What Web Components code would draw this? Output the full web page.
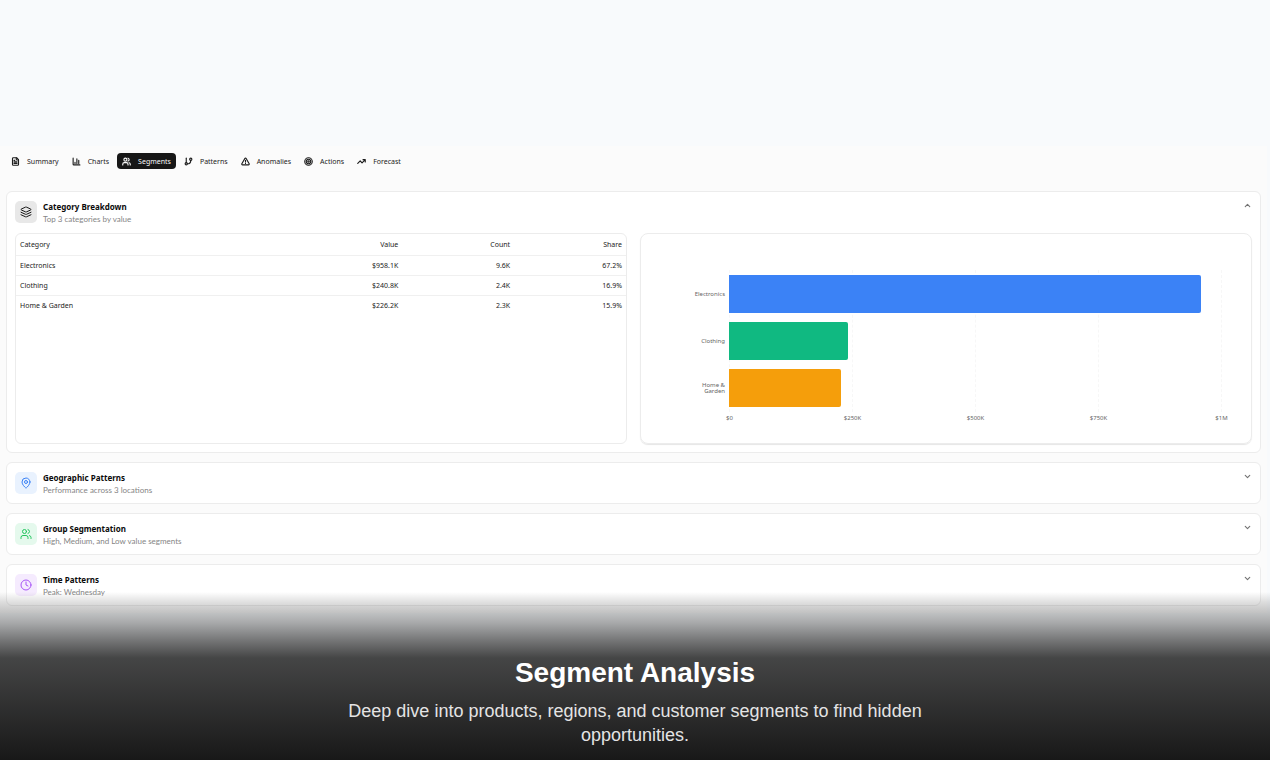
<!DOCTYPE html>
<html lang="en">
<head>
<meta charset="utf-8">
<title>Segment Analysis</title>
<style>
    body {
        margin: 0;
        background: #f8fafc;
        font-family: "Noto Sans", "Open Sans", sans-serif;
        color: #1c1c1c;
    }
</style>
</head>
<body>
<segment-page>
    <tab-bar slot="tabs">
        <tab-item icon="file">Summary</tab-item>
        <tab-item icon="chart">Charts</tab-item>
        <tab-item icon="users" active>Segments</tab-item>
        <tab-item icon="branch">Patterns</tab-item>
        <tab-item icon="alert">Anomalies</tab-item>
        <tab-item icon="target">Actions</tab-item>
        <tab-item icon="trend">Forecast</tab-item>
    </tab-bar>
    <segment-card icon="layers" tone="gray" open>
        <span slot="title">Category Breakdown</span>
        <span slot="subtitle">Top 3 categories by value</span>
        <category-table></category-table>
        <category-chart></category-chart>
    </segment-card>
    <segment-card icon="pin" tone="blue">
        <span slot="title">Geographic Patterns</span>
        <span slot="subtitle">Performance across 3 locations</span>
    </segment-card>
    <segment-card icon="users" tone="green">
        <span slot="title">Group Segmentation</span>
        <span slot="subtitle">High, Medium, and Low value segments</span>
    </segment-card>
    <segment-card icon="clock" tone="purple">
        <span slot="title">Time Patterns</span>
        <span slot="subtitle">Peak: Wednesday</span>
    </segment-card>
    <caption-overlay slot="caption">
        <span slot="title">Segment Analysis</span>
        Deep dive into products, regions, and customer segments to find hidden opportunities.
    </caption-overlay>
</segment-page>

<script>
const ICONS = {
    file: '<path d="M15 2H6a2 2 0 0 0-2 2v16a2 2 0 0 0 2 2h12a2 2 0 0 0 2-2V7Z"/><path d="M14 2v4a2 2 0 0 0 2 2h4M10 9H8M16 13H8M16 17H8"/>',
    chart: '<path d="M3 3v16a2 2 0 0 0 2 2h16M18 17V9M13 17V5M8 17v-3"/>',
    users: '<path d="M16 21v-2a4 4 0 0 0-4-4H6a4 4 0 0 0-4 4v2"/><circle cx="9" cy="7" r="4"/><path d="M22 21v-2a4 4 0 0 0-3-3.87M16 3.13a4 4 0 0 1 0 7.75"/>',
    branch: '<path d="M6 3v12"/><circle cx="18" cy="6" r="3"/><circle cx="6" cy="18" r="3"/><path d="M18 9a9 9 0 0 1-9 9"/>',
    alert: '<path d="m21.73 18-8-14a2 2 0 0 0-3.48 0l-8 14A2 2 0 0 0 4 21h16a2 2 0 0 0 1.73-3ZM12 9v4M12 17h.01"/>',
    target: '<circle cx="12" cy="12" r="10"/><circle cx="12" cy="12" r="6"/><circle cx="12" cy="12" r="2"/>',
    trend: '<path d="M22 7l-8.5 8.5-5-5L2 17M16 7h6v6"/>',
    layers: '<path d="m12.83 2.18a2 2 0 0 0-1.66 0L2.6 6.08a1 1 0 0 0 0 1.83l8.58 3.91a2 2 0 0 0 1.66 0l8.58-3.9a1 1 0 0 0 0-1.83ZM22 12.5l-9.17 4.16a2 2 0 0 1-1.66 0L2 12.5M22 17.5l-9.17 4.16a2 2 0 0 1-1.66 0L2 17.5"/>',
    pin: '<path d="M20 10c0 4.99-5.54 10.19-7.4 11.8a1 1 0 0 1-1.2 0C9.54 20.19 4 14.99 4 10a8 8 0 0 1 16 0Z"/><circle cx="12" cy="10" r="3"/>',
    clock: '<circle cx="12" cy="12" r="10"/><path d="M12 6v6l4 2"/>',
    up: '<path d="m18 15-6-6-6 6"/>',
    down: '<path d="m6 9 6 6 6-6"/>'
};

const ROWS = [
    { name: 'Electronics', value: '$958.1K', count: '9.6K', share: '67.2%', amount: 958.1, color: '#3b82f6' },
    { name: 'Clothing', value: '$240.8K', count: '2.4K', share: '16.9%', amount: 240.8, color: '#10b981' },
    { name: 'Home & Garden', value: '$226.2K', count: '2.3K', share: '15.9%', amount: 226.2, color: '#f59e0b' }
];

function icon(name) {
    return `<svg viewBox="0 0 24 24" fill="none" stroke="currentColor" stroke-width="2"
        stroke-linecap="round" stroke-linejoin="round" aria-hidden="true">${ICONS[name]}</svg>`;
}

function escape(text) {
    return text.replace('&', '&amp;');
}

class SegmentPage extends HTMLElement {
    constructor() {
        super();
        this.attachShadow({ mode: 'open' }).innerHTML = `
            <style>
                :host {
                    display: block;
                    position: relative;
                    box-sizing: border-box;
                    height: 100vh;
                    padding-top: 146px;
                    overflow: hidden;
                }
                main {
                    display: flex;
                    flex-direction: column;
                    gap: 9px;
                    margin-right: 3px;
                    padding: 7px 6px;
                    background: #fbfbfb;
                }
            </style>
            <main>
                <slot name="tabs"></slot>
                <slot></slot>
            </main>
            <slot name="caption"></slot>
        `;
    }
}

class TabBar extends HTMLElement {
    constructor() {
        super();
        this.attachShadow({ mode: 'open' }).innerHTML = `
            <style>
                :host {
                    display: flex;
                    gap: 3px;
                    margin-bottom: 13px;
                }
            </style>
            <slot></slot>
        `;
    }
}

class TabItem extends HTMLElement {
    constructor() {
        super();
        this.attachShadow({ mode: 'open' }).innerHTML = `
            <style>
                :host { display: block; }
                button {
                    display: flex;
                    align-items: center;
                    gap: 7px;
                    height: 16px;
                    padding: 0 5px;
                    border: 0;
                    border-radius: 4px;
                    background: none;
                    color: inherit;
                    font: inherit;
                    font-size: 7px;
                    line-height: 17px;
                }
                svg { width: 9px; height: 9px; stroke-width: 3; }
                :host([active]) button {
                    background: #171717;
                    color: #fafafa;
                }
            </style>
            <button type="button">${icon(this.getAttribute('icon'))}<slot></slot></button>
        `;
    }
}

class SegmentCard extends HTMLElement {
    constructor() {
        super();
        const open = this.hasAttribute('open');
        this.attachShadow({ mode: 'open' }).innerHTML = `
            <style>
                :host {
                    display: block;
                    padding: 8px;
                    border: 1px solid #ececec;
                    border-radius: 6px;
                    background: #fff;
                }
                button {
                    display: flex;
                    align-items: flex-start;
                    gap: 6px;
                    width: 100%;
                    height: 24px;
                    padding: 1px 0 0;
                    border: 0;
                    background: none;
                    color: inherit;
                    font: inherit;
                    font-size: 8px;
                    line-height: 12px;
                    text-align: left;
                }
                .badge {
                    display: grid;
                    place-items: center;
                    width: 22px;
                    height: 22px;
                    border-radius: 5px;
                }
                .badge svg { width: 12px; height: 12px; }
                .gray { background: #e8e8e8; color: #171717; }
                .blue { background: #e9f2fe; color: #3b82f6; }
                .green { background: #e5f9ed; color: #22c55e; }
                .purple { background: #f5ebfe; color: #a855f7; }
                .text { flex: 1; display: grid; }
                .title { color: #0a0a0a; font-weight: 700; }
                .subtitle { color: #858585; font-family: Lato, sans-serif; }
                .chevron { width: 9px; height: 9px; color: #737373; }
                .chevron svg { display: block; stroke-width: 3; }
                .content {
                    display: grid;
                    grid-template-columns: 1fr 1fr;
                    gap: 13px;
                    min-height: 211px;
                    margin-top: 9px;
                }
            </style>
            <button type="button" aria-expanded="${open}">
                <span class="badge ${this.getAttribute('tone')}">${icon(this.getAttribute('icon'))}</span>
                <span class="text">
                    <span class="title"><slot name="title"></slot></span>
                    <span class="subtitle"><slot name="subtitle"></slot></span>
                </span>
                <span class="chevron">${icon(open ? 'up' : 'down')}</span>
            </button>
            ${open ? '<div class="content"><slot></slot></div>' : ''}
        `;
    }
}

class CategoryTable extends HTMLElement {
    constructor() {
        super();
        this.attachShadow({ mode: 'open' }).innerHTML = `
            <style>
                :host {
                    display: block;
                    border: 1px solid #ececec;
                    border-radius: 6px;
                    font-size: 7px;
                    line-height: 19px;
                }
                table {
                    width: 100%;
                    table-layout: fixed;
                    border-spacing: 0;
                }
                th, td {
                    padding: 0 4px;
                    border-bottom: 1px solid #f0f0f0;
                    font-weight: 400;
                    text-align: right;
                }
                th { line-height: 21px; }
                th:first-child, td:first-child {
                    box-sizing: border-box;
                    width: 45%;
                    text-align: left;
                }
                tr:last-child td { border-bottom: 0; }
            </style>
            <table>
                <thead>
                    <tr><th>Category</th><th>Value</th><th>Count</th><th>Share</th></tr>
                </thead>
                <tbody>
                    ${ROWS.map(r => `<tr><td>${escape(r.name)}</td><td>${r.value}</td><td>${r.count}</td><td>${r.share}</td></tr>`).join('')}
                </tbody>
            </table>
        `;
    }
}

class CategoryChart extends HTMLElement {
    constructor() {
        super();
        this.attachShadow({ mode: 'open' }).innerHTML = `
            <style>
                :host {
                    display: grid;
                    grid-template-columns: 44px 1fr;
                    grid-template-rows: 142px 12px;
                    column-gap: 4px;
                    padding: 36px 29px 17px 40px;
                    border: 1px solid #ececec;
                    border-radius: 8px;
                    box-shadow: 0 1px 1px #0000001a;
                    color: #666;
                    font-size: 6px;
                    line-height: 6px;
                }
                .names, .bars {
                    display: grid;
                    grid-template-rows: repeat(3, 1fr);
                    align-items: center;
                }
                .names { justify-items: end; text-align: right; }
                .names span { max-width: 32px; }
                .bars, .lines { grid-area: 1 / 2; }
                .bars i { height: 38px; border-radius: 0 2px 2px 0; }
                .lines { display: flex; justify-content: space-between; }
                .lines i { width: 0; border-left: 1px dashed #f7f7f7; }
                .ticks {
                    grid-column: 2;
                    display: flex;
                    align-items: center;
                    justify-content: space-between;
                }
                .ticks span { display: flex; justify-content: center; width: 1px; }
            </style>
            <div class="names">${ROWS.map(r => `<span>${escape(r.name)}</span>`).join('')}</div>
            <div class="lines"><i></i><i></i><i></i><i></i><i></i></div>
            <div class="bars">${ROWS.map(r => `<i style="width:${r.amount / 10}%;background:${r.color}"></i>`).join('')}</div>
            <div class="ticks"><span>$0</span><span>$250K</span><span>$500K</span><span>$750K</span><span>$1M</span></div>
        `;
    }
}

class CaptionOverlay extends HTMLElement {
    constructor() {
        super();
        this.attachShadow({ mode: 'open' }).innerHTML = `
            <style>
                :host {
                    display: block;
                    position: absolute;
                    inset: auto 0 0;
                    box-sizing: border-box;
                    height: 170px;
                    padding: 63px 24px 0;
                    background: linear-gradient(#18181800 2px, #18181822 12px, #1818185c 33px, #18181894 50px, #181818cc 68px, #181818 170px);
                    color: #e4e4e4;
                    font: 18px/24px "Liberation Sans", Arial, sans-serif;
                    text-align: center;
                }
                h1 {
                    margin: 0 0 6px;
                    color: #fff;
                    font-size: 28px;
                    line-height: 40px;
                }
                p { max-width: 600px; margin: 0 auto; }
            </style>
            <h1><slot name="title"></slot></h1>
            <p><slot></slot></p>
        `;
    }
}

window.customElements.define('segment-page', SegmentPage);
window.customElements.define('tab-bar', TabBar);
window.customElements.define('tab-item', TabItem);
window.customElements.define('segment-card', SegmentCard);
window.customElements.define('category-table', CategoryTable);
window.customElements.define('category-chart', CategoryChart);
window.customElements.define('caption-overlay', CaptionOverlay);
</script>
</body>
</html>
